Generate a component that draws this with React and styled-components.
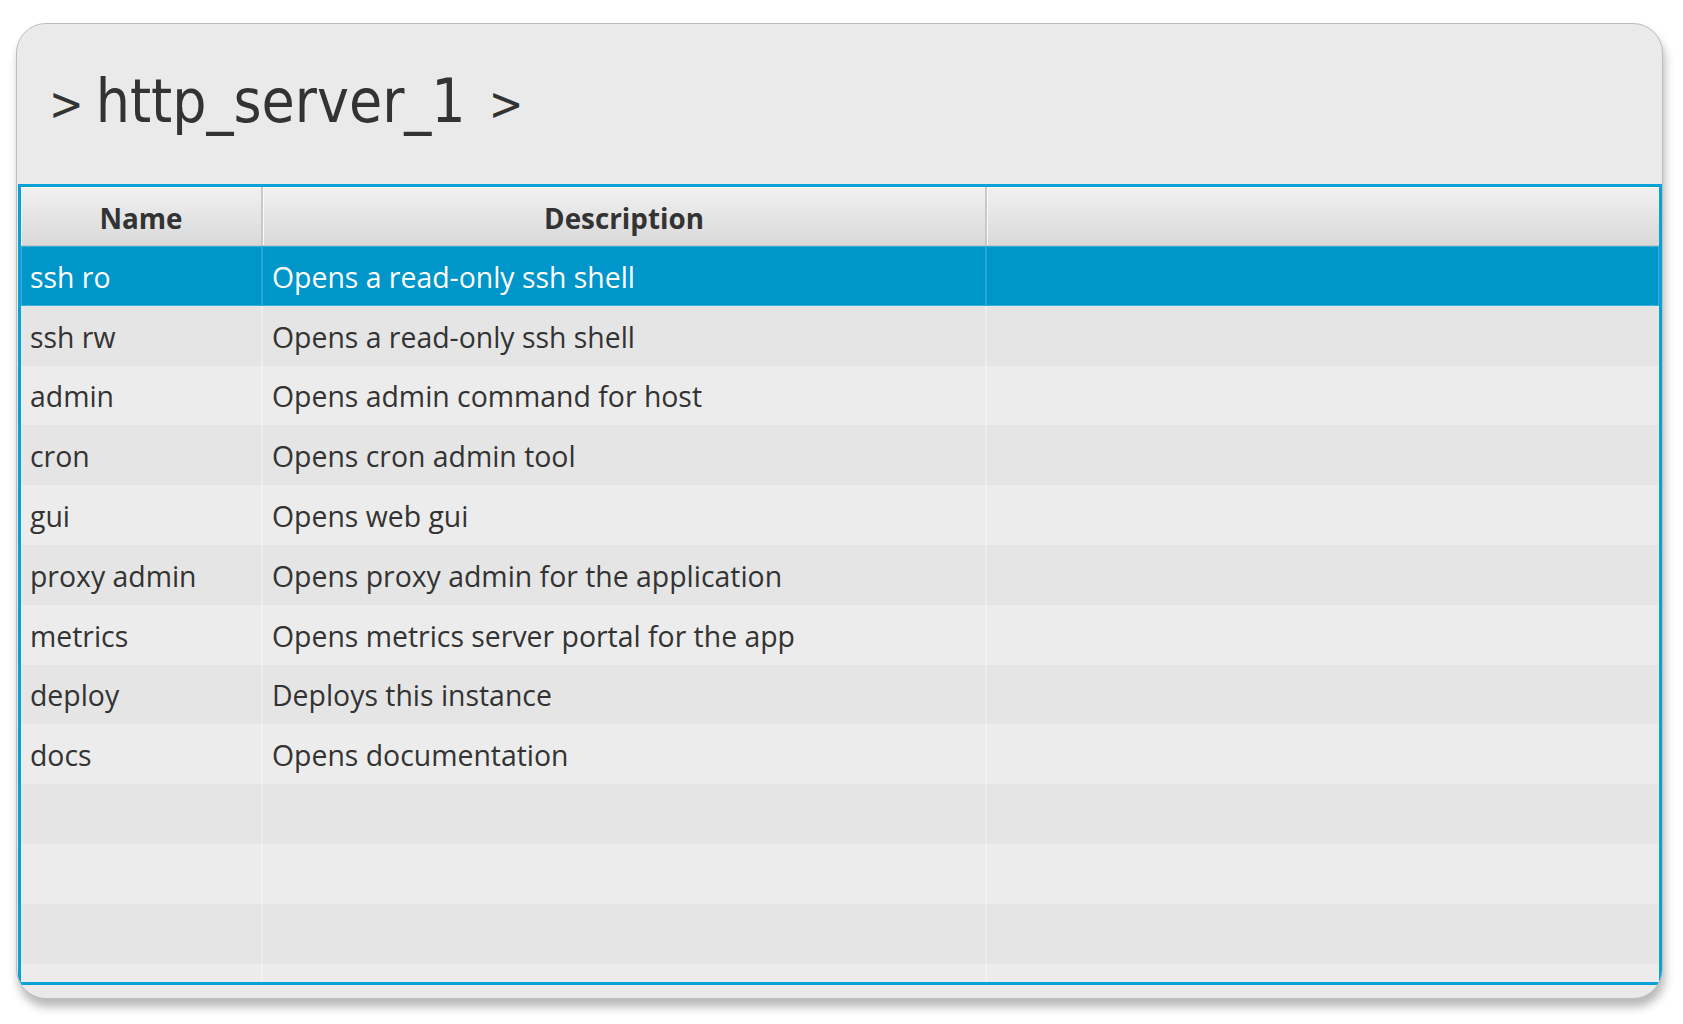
import React from "react";
import styled, { createGlobalStyle } from "styled-components";

const GlobalStyle = createGlobalStyle`
	html, body {
		margin: 0;
		padding: 0;
		background: #ffffff;
	}
	body {
		font-family: "Open Sans", "Noto Sans", sans-serif;
		color: #333333;
	}
`;

const Page = styled.div`
	padding: 23px 20px 0 16px;
	width: 1683px;
	height: 1024px;
	box-sizing: border-box;
`;

const Card = styled.div`
	width: 1647px;
	height: 976px;
	box-sizing: border-box;
	display: flex;
	flex-direction: column;
	background: #eaeaea;
	border: 1.5px solid #bdbdbd;
	border-radius: 30px;
	box-shadow: 2px 8px 10px rgba(0, 0, 0, 0.28);
	overflow: hidden;
`;

const Breadcrumb = styled.div`
	height: 160px;
	flex: none;
	display: flex;
	align-items: center;
	padding-left: 32px;
	padding-bottom: 6px;
	box-sizing: border-box;
	font-family: "DejaVu Sans Condensed", "DejaVu Sans", sans-serif;
	font-size: 60px;
	color: #333333;
	white-space: pre;
`;

const Chevron = styled.span`
	font-size: 46px;
	margin: ${p => (p.$end ? "6px 0 0 23px" : "6px 12px 0 0")};
`;

const Table = styled.div`
	margin: 0 0 0 1px;
	height: 801px;
	box-sizing: border-box;
	border: 3px solid #0aa0d8;
	display: flex;
	flex-direction: column;
	overflow: hidden;
`;

const cols = "242px 724px 1fr";

const HeaderRow = styled.div`
	display: grid;
	grid-template-columns: ${cols};
	height: 59px;
	flex: none;
	box-sizing: border-box;
	border-bottom: 1px solid #c6c6c6;
`;

const HeaderCell = styled.div`
	display: flex;
	align-items: center;
	justify-content: center;
	background: linear-gradient(#f1f1f1, #d9d9d9);
	box-shadow: inset 1px 1px 0 #fafafa;
	border-right: 2px solid #c9c9c9;
	font-weight: 700;
	font-size: 27.8px;
	color: #333333;
	padding-top: 3px;

	&:last-child {
		border-right: none;
	}
`;

const Body = styled.div`
	flex: 1;
	overflow: hidden;
`;

const Row = styled.div`
	display: grid;
	grid-template-columns: ${cols};
	height: 59.8px;
	box-sizing: border-box;
	background: ${p => (p.$selected ? "#0096c9" : p.$odd ? "#e5e5e5" : "#ececec")};
	color: ${p => (p.$selected ? "#ffffff" : "#333333")};
	box-shadow: ${p => (p.$selected ? "inset 0 0 0 1px #3aaedb" : "none")};
`;

const Cell = styled.div`
	display: flex;
	align-items: center;
	padding-left: 9px;
	padding-top: 2px;
	font-size: 28.4px;
	white-space: nowrap;
	overflow: hidden;
	border-right: 2px solid ${p => (p.$selected ? "#2aa6d6" : p.$odd ? "#ececec" : "#f1f1f1")};

	&:last-child {
		border-right: none;
	}
`;

const commands = [
	{ name: "ssh ro", description: "Opens a read-only ssh shell" },
	{ name: "ssh rw", description: "Opens a read-only ssh shell" },
	{ name: "admin", description: "Opens admin command for host" },
	{ name: "cron", description: "Opens cron admin tool" },
	{ name: "gui", description: "Opens web gui" },
	{ name: "proxy admin", description: "Opens proxy admin for the application" },
	{ name: "metrics", description: "Opens metrics server portal for the app" },
	{ name: "deploy", description: "Deploys this instance" },
	{ name: "docs", description: "Opens documentation" },
];

const rows = [...commands, ...Array(4).fill({ name: "", description: "" })];

const renderRow = (row, i) => {
	const selected = i === 0;
	const odd = i % 2 === 1;
	return (
		<Row key={i} $selected={selected} $odd={odd}>
			<Cell $selected={selected} $odd={odd}>{row.name}</Cell>
			<Cell $selected={selected} $odd={odd}>{row.description}</Cell>
			<Cell $selected={selected} $odd={odd} />
		</Row>
	);
};

const App = () => (
	<Page>
		<GlobalStyle />
		<Card>
			<Breadcrumb>
				<Chevron>&gt;</Chevron>
				http_server_1
				<Chevron $end>&gt;</Chevron>
			</Breadcrumb>
			<Table>
				<HeaderRow>
					<HeaderCell>Name</HeaderCell>
					<HeaderCell>Description</HeaderCell>
					<HeaderCell />
				</HeaderRow>
				<Body>{rows.map(renderRow)}</Body>
			</Table>
		</Card>
	</Page>
);

export default App;
